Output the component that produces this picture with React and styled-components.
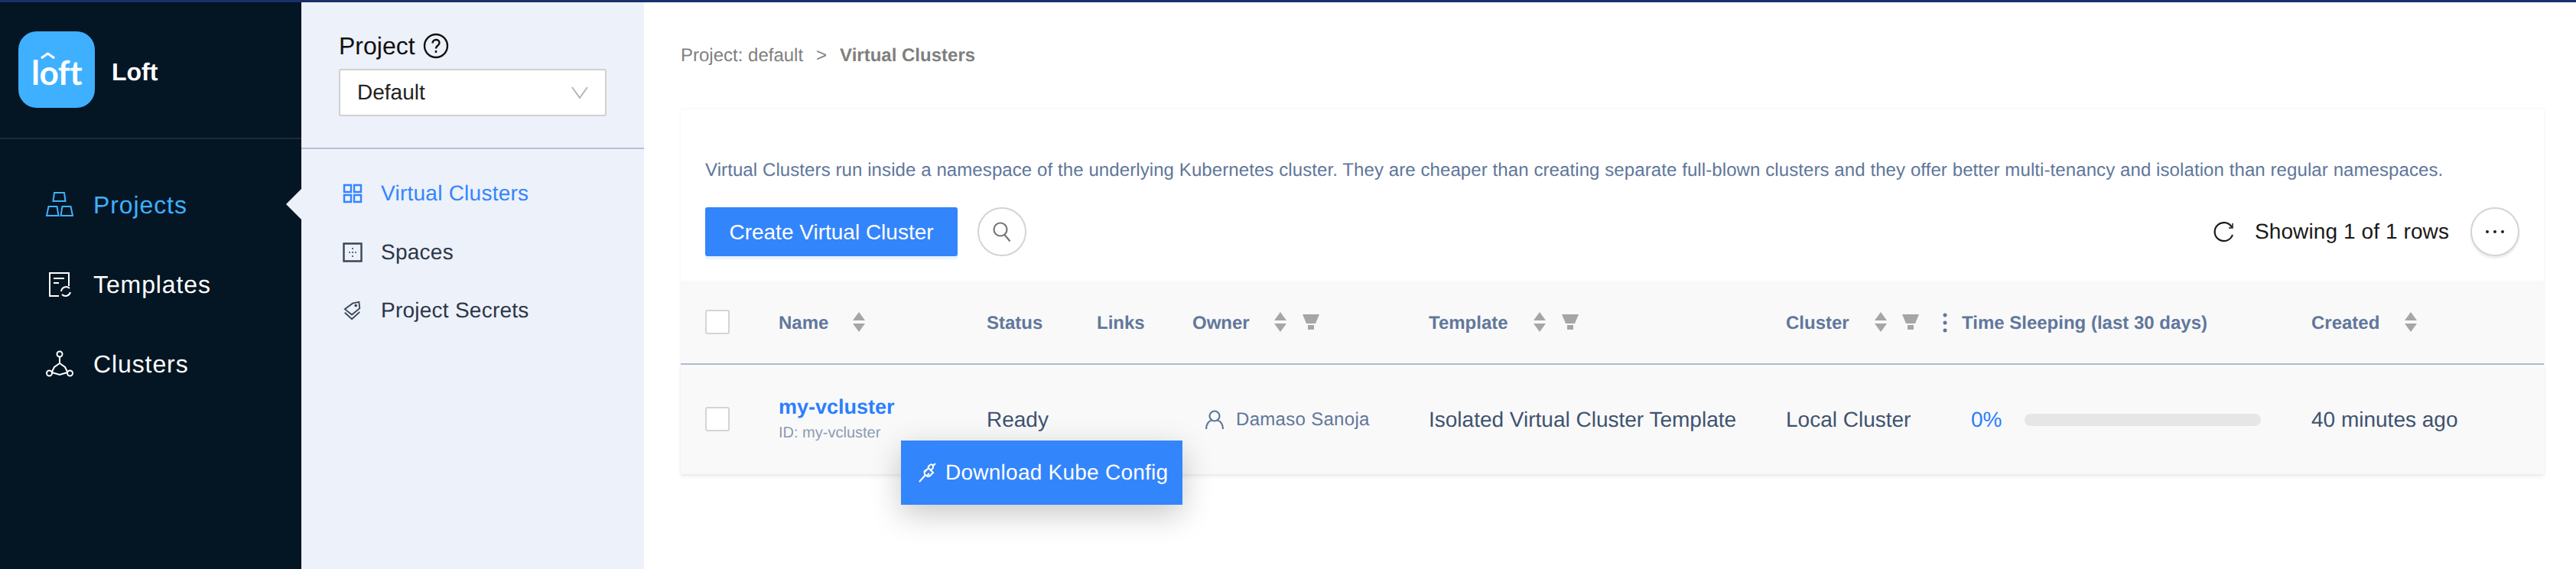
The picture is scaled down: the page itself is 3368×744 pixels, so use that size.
import React from "react"
import styled, { createGlobalStyle } from "styled-components"

const GlobalStyle = createGlobalStyle`
  html, body {
    margin: 0;
    padding: 0;
    background: #fff;
    font-family: "Liberation Sans", Arial, sans-serif;
    text-rendering: geometricPrecision;
  }
  * {
    box-sizing: border-box;
  }
`

const TopBar = styled.div`
  height: 3px;
  background: #1a2f6b;
`

const Shell = styled.div`
  display: flex;
  height: 741px;
  overflow: hidden;
`

const Sidebar = styled.aside`
  width: 394px;
  flex: none;
  background: #041624;
  position: relative;
`

const Brand = styled.div`
  height: 179px;
  padding: 38px 0 0 24px;
  display: flex;
  align-items: flex-start;
  gap: 22px;
  border-bottom: 2px solid #1f2b38;
`

const LogoTile = styled.div`
  width: 100px;
  height: 100px;
  border-radius: 24px;
  background: #3fb0ff;
  color: #fff;
  display: flex;
  align-items: center;
  justify-content: center;
`

const LogoWord = styled.span`
  position: relative;
  font: 700 44px/1 "Lato", sans-serif;
  letter-spacing: -0.4px;
  margin-top: 8px;
  svg {
    position: absolute;
    left: 12px;
    top: -5px;
    width: 19px;
    height: 9px;
  }
`

const BrandName = styled.div`
  color: #fff;
  font-weight: 700;
  font-size: 32px;
  line-height: 106px;
`

const NavList = styled.nav`
  padding-top: 34px;
`

const NavItem = styled.div`
  height: 104px;
  padding-left: 60px;
  display: flex;
  align-items: center;
  gap: 26px;
  font-size: 32px;
  letter-spacing: 0.9px;
  color: ${(p) => (p.$active ? "#3fb0ff" : "#fff")};
  svg {
    width: 36px;
    height: 36px;
    flex: none;
  }
`

const Notch = styled.div`
  position: absolute;
  right: 0;
  top: 244px;
  width: 20px;
  height: 40px;
  background: #edf1f9;
  clip-path: polygon(100% 0, 0 50%, 100% 100%);
`

const SubPanel = styled.section`
  width: 448px;
  flex: none;
  background: #edf1f9;
`

const ProjectPicker = styled.div`
  height: 192px;
  padding: 39px 49px 0;
  border-bottom: 2px solid #b4c0da;
`

const ProjectLabel = styled.div`
  display: flex;
  align-items: center;
  gap: 10px;
  height: 36px;
  font-size: 32px;
  color: #111;
  svg {
    width: 34px;
    height: 34px;
  }
`

const SelectBox = styled.div`
  margin-top: 12px;
  height: 62px;
  width: 350px;
  padding: 0 22px 0 22px;
  background: #fff;
  border: 2px solid #d0d0d0;
  border-radius: 3px;
  display: flex;
  align-items: center;
  justify-content: space-between;
  font-size: 28px;
  color: #222;
  svg {
    width: 22px;
    height: 16px;
  }
`

const SubNav = styled.nav`
  padding: 20px 0 0 54px;
`

const SubNavItem = styled.div`
  height: 76.5px;
  display: flex;
  align-items: center;
  gap: 24px;
  font-size: 28px;
  letter-spacing: 0.25px;
  color: ${(p) => (p.$active ? "#3385ff" : "#2b3648")};
  svg {
    width: 26px;
    height: 26px;
    flex: none;
  }
`

const Main = styled.main`
  flex: 1;
  min-width: 0;
  padding: 0 42px 0 48px;
`

const Breadcrumb = styled.div`
  height: 140px;
  padding-top: 56px;
  font-size: 24px;
  line-height: 28px;
  color: #7f7f7f;
  display: flex;
  gap: 17px;
  b {
    font-weight: 700;
  }
`

const Card = styled.div`
  background: #fff;
  box-shadow: 0 0 4px rgba(40, 60, 90, 0.08);
`

const CardTop = styled.div`
  padding: 64px 32px 32px;
`

const Description = styled.p`
  margin: 0 0 32px;
  font-size: 24px;
  line-height: 32px;
  letter-spacing: 0.09px;
  color: #60769a;
`

const ActionRow = styled.div`
  display: flex;
  align-items: center;
  height: 64px;
`

const CreateButton = styled.button`
  width: 330px;
  height: 64px;
  border: 0;
  border-radius: 3px;
  background: #3385fb;
  box-shadow: 0 4px 0 #e6f4ff;
  color: #fff;
  font: 28px "Liberation Sans", Arial, sans-serif;
  padding: 2px 0 0;
`

const RoundButton = styled.button`
  width: 64px;
  height: 64px;
  margin-left: ${(p) => p.$left || 0}px;
  padding: 0;
  border-radius: 50%;
  border: 2px solid #d4d4d4;
  background: #fff;
  display: flex;
  align-items: center;
  justify-content: center;
  box-shadow: ${(p) => (p.$raised ? "0 3px 3px rgba(0,0,0,0.08)" : "none")};
`

const RowInfo = styled.div`
  margin-left: auto;
  display: flex;
  align-items: center;
  font-size: 28px;
  letter-spacing: 0.1px;
  color: #1a1a1a;
  svg {
    margin-right: 26px;
  }
`

const columns = "96px 272px 144px 125px 309px 467px 230px 457px 1fr"

const HeadRow = styled.div`
  display: grid;
  grid-template-columns: ${columns};
  align-items: center;
  height: 110px;
  padding: 3px 0 0 32px;
  background: #f9f9f9;
  border-bottom: 2px solid #adbbd3;
`

const HeadCell = styled.div`
  display: flex;
  align-items: center;
  font-size: 24px;
  font-weight: 700;
  color: #61779b;
  white-space: nowrap;
  position: relative;
`

const SortIcon = styled.svg`
  width: 18px;
  height: 26px;
  margin: -4px 0 0 ${(p) => p.$gap}px;
  flex: none;
`

const FilterIcon = styled.svg`
  width: 22px;
  height: 20px;
  margin: -3px 0 0 ${(p) => p.$gap || 20}px;
  flex: none;
`

const ResizeDots = styled.svg`
  position: absolute;
  left: -26px;
  top: 0;
  width: 8px;
  height: 26px;
`

const Checkbox = styled.div`
  width: 32px;
  height: 32px;
  margin-top: ${(p) => p.$shift || 0}px;
  border: 2px solid #d4d4d4;
  border-radius: 3px;
  background: #fff;
`

const BodyRow = styled.div`
  display: grid;
  grid-template-columns: ${columns};
  align-items: center;
  height: 143px;
  padding-left: 32px;
  background: #f9f9f9;
  position: relative;
  font-size: 28px;
  color: #3f5370;
  white-space: nowrap;
  box-shadow: 0 4px 4px rgba(60, 90, 130, 0.07);
`

const NameLink = styled.div`
  color: #2b7fff;
  font-weight: 700;
  font-size: 27px;
  line-height: 32px;
  margin-top: -4px;
`

const NameId = styled.div`
  color: #8b9bb4;
  font-size: 20px;
  line-height: 24px;
  margin-top: 6px;
`

const OwnerCell = styled.div`
  display: flex;
  align-items: center;
  gap: 15px;
  padding-left: 16px;
  font-size: 24px;
  letter-spacing: 0.3px;
  color: #60769a;
  svg {
    width: 26px;
    height: 26px;
  }
`

const SleepCell = styled.div`
  display: flex;
  align-items: center;
  gap: 30px;
  padding-left: 12px;
`

const Percent = styled.span`
  color: #2b7fff;
`

const SleepBar = styled.div`
  width: 309px;
  height: 16px;
  border-radius: 8px;
  background: #e6e6e6;
`

const Popup = styled.div`
  position: absolute;
  left: 288px;
  top: 99px;
  width: 368px;
  height: 84px;
  background: #3385fb;
  color: #fff;
  display: flex;
  align-items: center;
  gap: 11px;
  padding-left: 21px;
  font-size: 28px;
  letter-spacing: 0.25px;
  box-shadow: 0 12px 40px rgba(0, 0, 0, 0.22);
  svg {
    width: 26px;
    height: 28px;
    flex: none;
  }
`

const Sort = ({ gap }) => (
  <SortIcon $gap={gap} viewBox="0 0 18 26" fill="#a6a6a6">
    <path d="M9 0l8 11H1zM9 26l-8-11h16z" />
  </SortIcon>
)

const Filter = ({ gap }) => (
  <FilterIcon $gap={gap} viewBox="0 0 22 20" fill="#a6a6a6">
    <path d="M0 0h22l-5 12H5zM7 14h8v6H7z" />
  </FilterIcon>
)

const IconStroke = { fill: "none", stroke: "currentColor", strokeWidth: 2 }

const App = () => (
  <>
    <GlobalStyle />
    <TopBar />
    <Shell>
      <Sidebar>
        <Brand>
          <LogoTile>
            <LogoWord>
              loft
              <svg viewBox="0 0 19 9" fill="none" stroke="#fff" strokeWidth="3">
                <path d="M1 8l8.500-6L18 8" />
              </svg>
            </LogoWord>
          </LogoTile>
          <BrandName>Loft</BrandName>
        </Brand>
        <NavList>
          <NavItem $active>
            <svg viewBox="0 0 36 36" {...IconStroke}>
              <path d="M11 2h13l1.500 11h-16zM3.500 20h11l2 12H1zM21.500 20h11L35 32H19.500z" />
            </svg>
            Projects
          </NavItem>
          <NavItem>
            <svg viewBox="0 0 36 36" {...IconStroke}>
              <path d="M17 33H5V3h25v17" />
              <path d="M10 10h14M10 16h7" />
              <path d="M20 27a6.500 6.500 0 0 1 11-4M32 28a6.500 6.500 0 0 1-11 3" />
            </svg>
            Templates
          </NavItem>
          <NavItem>
            <svg viewBox="0 0 36 36" {...IconStroke}>
              <circle cx="18" cy="5" r="3.500" />
              <circle cx="4.500" cy="30" r="3.500" />
              <circle cx="31.500" cy="30" r="3.500" />
              <path d="M18 9v8M18 17l-7 5-3 6M18 17l7 5 3 6M8 29l10 3 10-3" />
            </svg>
            Clusters
          </NavItem>
        </NavList>
        <Notch />
      </Sidebar>
      <SubPanel>
        <ProjectPicker>
          <ProjectLabel>
            Project
            <svg viewBox="0 0 34 34" fill="none" stroke="#111" strokeWidth="2.400">
              <circle cx="17" cy="17" r="15" />
              <path d="M12.500 13.500c0-6 9-6 9-.5 0 3.500-4.500 3.500-4.500 7.500" />
              <path d="M17 23v3" />
            </svg>
          </ProjectLabel>
          <SelectBox>
            Default
            <svg viewBox="0 0 22 16" fill="none" stroke="#b5b5b5" strokeWidth="2">
              <path d="M1 1l10 14L21 1" />
            </svg>
          </SelectBox>
        </ProjectPicker>
        <SubNav>
          <SubNavItem $active>
            <svg viewBox="0 0 26 26" {...IconStroke} strokeWidth="2.400">
              <path d="M2 2h9v9H2zM15 2h9v9h-9zM2 15h9v9H2zM15 15h9v9h-9z" />
            </svg>
            Virtual Clusters
          </SubNavItem>
          <SubNavItem>
            <svg viewBox="0 0 26 26" fill="none" stroke="#3a4657" strokeWidth="2.400">
              <path d="M1.500 1.500h23v23h-23z" />
              <path d="M13 7v2M13 12v2M13 17v2M8 13h2M16 13h2" strokeWidth="1.600" />
            </svg>
            Spaces
          </SubNavItem>
          <SubNavItem>
            <svg viewBox="0 0 26 28" fill="none" stroke="#3a4657" strokeWidth="2">
              <path d="M2 12L13 4l9-2 1 9-11 9z" />
              <path d="M2 17l10 9 11-10" />
              <circle cx="17.500" cy="7" r="1" />
            </svg>
            Project Secrets
          </SubNavItem>
        </SubNav>
      </SubPanel>
      <Main>
        <Breadcrumb>
          <span>Project: default</span>
          <span>&gt;</span>
          <b>Virtual Clusters</b>
        </Breadcrumb>
        <Card>
          <CardTop>
            <Description>
              Virtual Clusters run inside a namespace of the underlying Kubernetes cluster. They are cheaper than
              creating separate full-blown clusters and they offer better multi-tenancy and isolation than regular
              namespaces.
            </Description>
            <ActionRow>
              <CreateButton>Create Virtual Cluster</CreateButton>
              <RoundButton $left={26}>
                <svg width="26" height="28" viewBox="0 0 26 28" fill="none" stroke="#777" strokeWidth="2.200">
                  <circle cx="11" cy="11" r="8.500" />
                  <path d="M16.500 18l7 8.500" />
                </svg>
              </RoundButton>
              <RowInfo>
                <svg width="28" height="28" viewBox="0 0 28 28" fill="none" stroke="#1a1a1a" strokeWidth="2.200">
                  <path d="M24 8a12 12 0 1 0 1 10" />
                  <path d="M25 3v6h-5" strokeWidth="1.500" />
                </svg>
                Showing 1 of 1 rows
              </RowInfo>
              <RoundButton $left={28} $raised>
                <svg width="26" height="6" viewBox="0 0 26 6" fill="#222">
                  <circle cx="3" cy="3" r="2" />
                  <circle cx="13" cy="3" r="2" />
                  <circle cx="23" cy="3" r="2" />
                </svg>
              </RoundButton>
            </ActionRow>
          </CardTop>
          <HeadRow>
            <Checkbox $shift={-3} />
            <HeadCell>
              Name
              <Sort gap={31} />
            </HeadCell>
            <HeadCell>Status</HeadCell>
            <HeadCell>Links</HeadCell>
            <HeadCell>
              Owner
              <Sort gap={31} />
              <Filter gap={20} />
            </HeadCell>
            <HeadCell>
              Template
              <Sort gap={32} />
              <Filter gap={20} />
            </HeadCell>
            <HeadCell>
              Cluster
              <Sort gap={32} />
              <Filter gap={19} />
            </HeadCell>
            <HeadCell>
              <ResizeDots viewBox="0 0 8 26" fill="#61779b">
                <circle cx="4" cy="3" r="2.500" />
                <circle cx="4" cy="13" r="2.500" />
                <circle cx="4" cy="23" r="2.500" />
              </ResizeDots>
              Time Sleeping (last 30 days)
            </HeadCell>
            <HeadCell>
              Created
              <Sort gap={32} />
            </HeadCell>
          </HeadRow>
          <BodyRow>
            <Checkbox $shift={-2} />
            <div>
              <NameLink>my-vcluster</NameLink>
              <NameId>ID: my-vcluster</NameId>
            </div>
            <div>Ready</div>
            <div />
            <OwnerCell>
              <svg viewBox="0 0 26 26" fill="none" stroke="#60769a" strokeWidth="2.200">
                <circle cx="13" cy="8" r="6.500" />
                <path d="M2 25c0-7 4-11 7-11M24 25c0-7-4-11-7-11" />
              </svg>
              Damaso Sanoja
            </OwnerCell>
            <div>Isolated Virtual Cluster Template</div>
            <div>Local Cluster</div>
            <SleepCell>
              <Percent>0%</Percent>
              <SleepBar />
            </SleepCell>
            <div>40 minutes ago</div>
            <Popup>
              <svg viewBox="0 0 26 28" fill="none" stroke="#fff" strokeWidth="2">
                <path d="M15 8l6 6-4 4c-2 2-4 1-6-1s-2-3 0-5zM18 11l2-2c2-2 1-4 0-5s-3-1-4 1l-2 2M11 17l-8 9M21 5l3-3M9 13l3-3M13 18l3-3" />
              </svg>
              Download Kube Config
            </Popup>
          </BodyRow>
        </Card>
      </Main>
    </Shell>
  </>
)

export default App
